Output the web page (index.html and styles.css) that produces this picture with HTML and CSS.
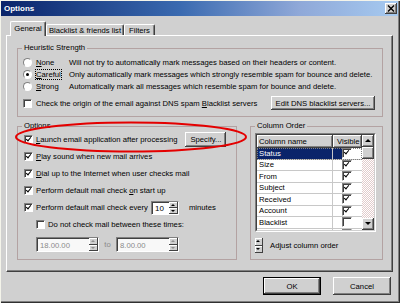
FILE: index.html
```html
<!DOCTYPE html>
<html>
<head>
<meta charset="utf-8">
<title>Options</title>
<link rel="stylesheet" href="styles.css">
</head>
<body>
<div class="window">
  <div class="titlebar">
    <span class="title">Options</span>
    <span class="close"><svg width="8" height="7" viewBox="0 0 8 7"><path d="M1 0.5L7 6.5M7 0.5L1 6.5" stroke="#000" stroke-width="1.4"/></svg></span>
  </div>
  <div class="tabs">
    <div class="tab active">General</div>
    <div class="tab tab-bl">Blacklist &amp; friends list</div>
    <div class="tab tab-fi">Filters</div>
  </div>
  <div class="panel">
    <fieldset class="group heuristic">
      <legend>Heuristic Strength</legend>
      <div class="hbody">
        <div class="radios">
          <span class="radio"></span><span><u>N</u>one</span><span>Will not try to automatically mark messages based on their headers or content.</span>
          <span class="radio on"></span><span><span class="focus"><u>C</u>areful</span></span><span>Only automatically mark messages which strongly resemble spam for bounce and delete.</span>
          <span class="radio"></span><span><u>S</u>trong</span><span>Automatically mark all messages which resemble spam for bounce and delete.</span>
        </div>
        <div class="dnsrow">
          <span class="check"></span>
          <span>Check the origin of the email against DNS spam <u>B</u>lacklist servers</span>
          <span class="btn dns">Edit DNS blacklist servers...</span>
        </div>
      </div>
    </fieldset>
    <div class="lower">
      <fieldset class="group options">
        <legend>Options</legend>
        <div class="obody">
          <div class="orow"><span class="check on"></span><span><u>L</u>aunch email application after processing</span><span class="btn specify">Specify...</span></div>
          <div class="orow"><span class="check on"></span><span><u>P</u>lay sound when new mail arrives</span></div>
          <div class="orow"><span class="check on"></span><span><u>D</u>ial up to the Internet when user checks mail</span></div>
          <div class="orow"><span class="check on"></span><span>Perform default mail check <u>o</u>n start up</span></div>
          <div class="orow"><span class="check on"></span><span>Perform default mail check every</span>
            <span class="spinner"><span class="sval">10</span><span class="spin"><span class="sb up"></span><span class="sb dn"></span></span></span>
            <span class="minutes">minutes</span></div>
          <div class="orow indent"><span class="check"></span><span>Do not check mail between these times:</span></div>
          <div class="times">
            <span class="tfield"><span class="tval">18.00.00</span><span class="spin dis"><span class="sb up"></span><span class="sb dn"></span></span></span>
            <span class="to">to</span>
            <span class="tfield"><span class="tval">8.00.00</span><span class="spin dis"><span class="sb up"></span><span class="sb dn"></span></span></span>
          </div>
        </div>
      </fieldset>
      <fieldset class="group colorder">
        <legend>Column Order</legend>
        <div class="cbody">
          <div class="list">
            <div class="list-inner">
              <div class="lcols">
                <div class="lrow head"><span class="cname hcell">Column name</span><span class="cvis hcell">Visible</span></div>
                <div class="lrow sel"><span class="cname">Status</span><span class="cvis"><span class="check on"></span></span></div>
                <div class="lrow"><span class="cname">Size</span><span class="cvis"><span class="check on"></span></span></div>
                <div class="lrow"><span class="cname">From</span><span class="cvis"><span class="check on"></span></span></div>
                <div class="lrow"><span class="cname">Subject</span><span class="cvis"><span class="check on"></span></span></div>
                <div class="lrow"><span class="cname">Received</span><span class="cvis"><span class="check on"></span></span></div>
                <div class="lrow"><span class="cname">Account</span><span class="cvis"><span class="check on"></span></span></div>
                <div class="lrow"><span class="cname">Blacklist</span><span class="cvis"><span class="check"></span></span></div>
                <div class="lrow"><span class="cname">Friends list</span><span class="cvis"><span class="check"></span></span></div>
              </div>
              <div class="vscroll">
                <span class="sbtn"><span class="arr up"></span></span>
                <span class="sbtn thumb"></span>
                <span class="track"></span>
                <span class="sbtn"><span class="arr dn"></span></span>
              </div>
            </div>
          </div>
          <div class="adjust">
            <span class="spin2"><span class="sb2"><span class="arr up"></span></span><span class="sb2"><span class="arr dn"></span></span></span>
            <span>Adjust column order</span>
          </div>
        </div>
      </fieldset>
    </div>
  </div>
  <div class="actions">
    <span class="default"><span class="btn ok">OK</span></span>
    <span class="btn cancel">Cancel</span>
  </div>
  <svg class="annot" width="400" height="303" viewBox="0 0 400 303"><ellipse cx="131" cy="137" rx="115" ry="14.5" fill="none" stroke="#e40000" stroke-width="2"/></svg>
</div>
</body>
</html>
```
FILE: styles.css
```css
* { box-sizing: border-box; }
body {
  margin: 0;
  font-family: "Liberation Sans", Arial, sans-serif;
  font-size: 7.7px;
  color: #000;
}
.window {
  position: relative;
  width: 400px;
  height: 303px;
  background: #d0d0d0;
  padding: 1px 2px 2px 1px;
  box-shadow: inset 1px 1px #f4f4ea, inset -1px -1px #303030, inset -2px -2px #808080;
  display: flex;
  flex-direction: column;
}
.titlebar {
  height: 15px;
  flex: none;
  background: linear-gradient(90deg, #0a246a 0%, #3a6ab0 45%, #8fa8d8 75%, #a6caf0 100%);
  display: flex;
  align-items: center;
  justify-content: space-between;
  padding: 0 1px 0 3px;
}
.title {
  color: #fff;
  font-weight: bold;
  font-size: 8px;
}
.close {
  width: 12px;
  height: 11px;
  background: #d0d0d0;
  box-shadow: inset -1px -1px #404040, inset 1px 1px #fff, inset -2px -2px #808080;
  display: flex;
  align-items: center;
  justify-content: center;
}
.close svg { display: block; margin-top: -1px; }
.tabs {
  display: flex;
  align-items: flex-end;
  height: 14px;
  margin-top: 5px;
  padding-left: 9px;
  flex: none;
}
.tab {
  height: 11px;
  border-top: 1px solid #fff;
  border-left: 1px solid #fff;
  border-right: 1px solid #404040;
  box-shadow: inset -1px 0 #808080;
  border-radius: 2px 2px 0 0;
  display: flex;
  align-items: center;
  justify-content: center;
  background: #d0d0d0;
}
.tab.active {
  width: 36px;
  height: 15px;
  margin-bottom: -1px;
  position: relative;
  z-index: 1;
  padding-bottom: 2px;
}
.tab-bl { width: 78px; }
.tab-fi { width: 31px; }
.panel {
  width: 387px;
  height: 237px;
  margin-left: 5px;
  flex: none;
  border-top: 1px solid #fff;
  border-left: 1px solid #fff;
  border-right: 1px solid #404040;
  border-bottom: 1px solid #404040;
  box-shadow: inset -1px -1px #808080;
  padding: 7px 0 0 10px;
}
fieldset.group {
  margin: 0;
  padding: 0;
  min-width: 0;
  border: 1px solid #b3a2a2;
  box-shadow: none;
}
legend {
  padding: 0 2px;
  margin-left: 4px;
  line-height: 10px;
  height: 10px;
}
.heuristic { width: 366px; height: 74px; }
.hbody { padding: 3px 7px 0 5px; }
.radios {
  display: grid;
  grid-template-columns: 13px 33px auto;
  grid-auto-rows: 12px;
  align-items: center;
}
.radio {
  width: 9px;
  height: 9px;
  border-radius: 50%;
  background: #fff;
  border: 1px solid;
  border-color: #808080 #fff #fff #808080;
  position: relative;
}
.radio.on::after {
  content: "";
  position: absolute;
  left: 2px;
  top: 2px;
  width: 3px;
  height: 3px;
  border-radius: 50%;
  background: #000;
}
.focus { outline: 1px dotted #000; outline-offset: 0; }
.check {
  width: 9px;
  height: 9px;
  flex: none;
  background: #fff;
  border: 1px solid;
  border-color: #808080 #fff #fff #808080;
  box-shadow: inset 1px 1px #404040;
  position: relative;
  display: inline-block;
}
.check.on::after {
  content: "";
  position: absolute;
  left: 2px;
  top: 0px;
  width: 2px;
  height: 4px;
  border: solid #000;
  border-width: 0 1.6px 1.6px 0;
  transform: rotate(40deg);
}
.dnsrow {
  display: flex;
  align-items: center;
  height: 14px;
  margin-top: 4px;
}
.dnsrow .check { margin-right: 4px; }
.btn {
  display: inline-flex;
  align-items: center;
  justify-content: center;
  background: #d0d0d0;
  box-shadow: inset -1px -1px #404040, inset 1px 1px #fff, inset -2px -2px #808080;
}
.dns { margin-left: auto; width: 104px; height: 14px; }
.lower {
  display: flex;
  gap: 13px;
  margin-top: 4px;
}
.options { width: 220px; height: 139px; }
.colorder { width: 133px; height: 139px; }
.obody { padding-left: 6px; }
.orow {
  display: flex;
  align-items: center;
  height: 17px;
}
.orow .check { margin-right: 3px; }
.orow.indent { padding-left: 12px; }
.specify { width: 41px; height: 15px; margin-left: 8px; }
.spinner {
  display: flex;
  width: 28px;
  height: 14px;
  margin-left: 3px;
  background: #fff;
  border: 1px solid;
  border-color: #808080 #fff #fff #808080;
  box-shadow: inset 1px 1px #404040;
}
.sval { flex: 1; padding-left: 3px; padding-top: 2px; font-size: 8px; }
.spin {
  width: 9px;
  display: flex;
  flex-direction: column;
}
.sb {
  flex: 1;
  background: #d0d0d0;
  box-shadow: inset -1px -1px #404040, inset 1px 1px #fff;
  position: relative;
}
.sb::after {
  content: "";
  position: absolute;
  left: 2px;
  border-left: 2.5px solid transparent;
  border-right: 2.5px solid transparent;
}
.sb.up::after { top: 2px; border-bottom: 2px solid #000; }
.sb.dn::after { top: 2px; border-top: 2px solid #000; }
.spin.dis .sb::after { border-top-color: #909090; border-bottom-color: #909090; }
.spin.dis .sb.up::after { border-top-color: transparent; }
.spin.dis .sb.dn::after { border-bottom-color: transparent; }
.minutes { margin-left: 10px; }
.times {
  display: flex;
  align-items: center;
  margin-top: 4px;
  padding-left: 12px;
}
.tfield {
  display: flex;
  width: 63px;
  height: 15px;
  background: #f8f8f8;
  border: 1px solid;
  border-color: #808080 #fff #fff #808080;
  box-shadow: inset 1px 1px #404040;
  color: #8a8a8a;
}
.tval { flex: 1; padding-left: 3px; padding-top: 3px; }
.to { width: 17px; text-align: center; color: #8a8a8a; }
.cbody { padding: 2px 0 0 4px; }
.list {
  width: 121px;
  height: 99px;
  border: 1px solid;
  border-color: #808080 #fff #fff #808080;
}
.list-inner {
  height: 100%;
  border: 1px solid;
  border-color: #404040 #d0d0d0 #d0d0d0 #404040;
  background: #fff;
  display: flex;
  overflow: hidden;
}
.lcols { flex: 1; }
.lrow {
  display: flex;
  height: 11.5px;
  border-bottom: 1px solid #c8c8c8;
}
.lrow.head { height: 13px; border-bottom: none; }
.cname {
  width: 76px;
  padding-left: 2px;
  display: flex;
  align-items: center;
  border-right: 1px solid #c8c8c8;
}
.cvis {
  flex: 1;
  display: flex;
  align-items: center;
  padding-left: 9px;
}
.hcell {
  background: #d0d0d0;
  box-shadow: inset -1px -1px #404040, inset 1px 1px #fff, inset -2px -2px #808080;
  border-right: none;
}
.cvis.hcell { padding-left: 4px; }
.lrow.sel .cname { background: #0a246a; color: #fff; }
.lrow.sel .cvis { background: linear-gradient(90deg, #0a246a 0 9px, #fff 9px); }
.lrow.sel { outline: 1px dotted #808080; outline-offset: -1px; }
.cvis .check { width: 10px; height: 10px; }
.vscroll {
  width: 12px;
  display: flex;
  flex-direction: column;
}
.sbtn {
  height: 12px;
  flex: none;
  background: #d0d0d0;
  box-shadow: inset -1px -1px #404040, inset 1px 1px #fff, inset -2px -2px #808080;
  position: relative;
}
.track {
  flex: 1;
  background: repeating-conic-gradient(#ffffff 0 25%, #e2cccc 0 50%) 0 0 / 2px 2px;
}
.arr {
  position: absolute;
  left: 3px;
  top: 4px;
  border-left: 3px solid transparent;
  border-right: 3px solid transparent;
}
.arr.up { border-bottom: 3px solid #000; }
.arr.dn { border-top: 3px solid #000; }
.adjust {
  display: flex;
  align-items: center;
  margin-top: 6px;
  height: 15px;
}
.spin2 {
  display: flex;
  flex-direction: column;
  width: 8px;
  height: 15px;
  margin-right: 7px;
}
.sb2 {
  flex: 1;
  background: #d0d0d0;
  box-shadow: inset -1px -1px #404040, inset 1px 1px #fff;
  position: relative;
}
.sb2 .arr { left: 1px; top: 2px; border-left-width: 2.5px; border-right-width: 2.5px; }
.sb2 .arr.up { border-bottom-width: 2px; }
.sb2 .arr.dn { border-top-width: 2px; }
.actions {
  display: flex;
  justify-content: flex-end;
  gap: 12px;
  margin-top: 5px;
  padding-right: 7px;
}
.default {
  display: flex;
  width: 58px;
  height: 18px;
  border: 1px solid #000;
}
.ok { flex: 1; }
.cancel { width: 58px; height: 18px; }
.annot {
  position: absolute;
  left: 0;
  top: 0;
  pointer-events: none;
}
```
